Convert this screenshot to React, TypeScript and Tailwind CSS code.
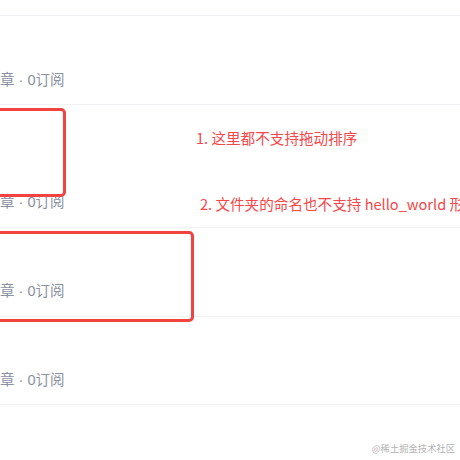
const ROWS = [
  { h: "h-[89px]", pb: "pb-[14px]", notes: false },
  { h: "h-[123px]", pb: "pb-[15px]", notes: true },
  { h: "h-[89px]", pb: "pb-[15px]", notes: false },
  { h: "h-[88px]", pb: "pb-[14px]", notes: false },
];

function Meta() {
  return (
    <div
      className="text-[14.5px] leading-[20px] text-[#8a919f] whitespace-nowrap"
      style={{ fontFamily: '"Liberation Sans", "Noto Sans CJK SC", sans-serif' }}
    >
      章 · 0订阅
    </div>
  );
}

function Notes() {
  return (
    <div className="flex flex-col text-[14.6px] leading-[20px] text-[#f5484a] whitespace-nowrap pt-[23px]">
      <div>1. 这里都不支持拖动排序</div>
      <div className="mt-[46px] pl-[4px]">2. 文件夹的命名也不支持 hello_world 形式</div>
    </div>
  );
}

export default function App() {
  return (
    <div
      className="relative w-[460px] h-[460px] overflow-hidden bg-white flex flex-col"
      style={{ fontFamily: '"Noto Sans CJK SC", "Liberation Sans", sans-serif' }}
    >
      {/* list */}
      <div className="h-[16px] border-b border-[#f0f1f4]" />
      {ROWS.map((row, i) => (
        <div
          key={i}
          className={`${row.h} grid grid-cols-[196px_1fr] border-b border-[#f0f1f4]`}
        >
          <div className={`flex flex-col justify-end ${row.pb}`}>
            <Meta />
          </div>
          {row.notes && <Notes />}
        </div>
      ))}

      {/* watermark */}
      <div className="flex-1 flex items-end justify-end pr-[5px] pb-[5px]">
        <div className="text-[9.3px] leading-[14px] text-[#b4b4b4] whitespace-nowrap">
          @稀土掘金技术社区
        </div>
      </div>

      {/* red highlight boxes drawn over the list */}
      <div className="absolute left-[-10px] top-[108px] w-[76px] h-[89px] border-[3px] border-[#f24343] rounded-[5px]" />
      <div className="absolute left-[-10px] top-[231px] w-[204px] h-[91px] border-[3px] border-[#f24343] rounded-[5px]" />
    </div>
  );
}
